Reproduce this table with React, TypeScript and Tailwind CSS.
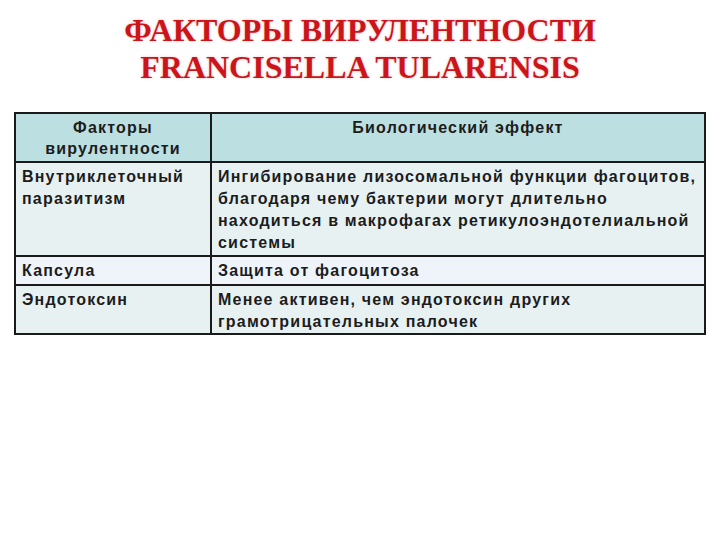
const ROWS = [
  {
    factor: ["Внутриклеточный", "паразитизм"],
    effect: [
      "Ингибирование лизосомальной функции фагоцитов,",
      "благодаря чему бактерии могут длительно",
      "находиться в макрофагах ретикулоэндотелиальной",
      "системы",
    ],
    height: "h-[94px]",
    bg: "bg-[#e7f1f2]",
  },
  {
    factor: ["Капсула"],
    effect: ["Защита от фагоцитоза"],
    height: "h-[29px]",
    bg: "bg-[#eef4fa]",
  },
  {
    factor: ["Эндотоксин"],
    effect: ["Менее активен, чем эндотоксин других", "грамотрицательных палочек"],
    height: "h-[48px]",
    bg: "bg-[#e7f1f2]",
  },
];

export default function App() {
  return (
    <div className="h-[540px] w-[720px] bg-white">
      <h1 className="pt-[12px] text-center font-['Liberation_Serif',serif] text-[32px] font-bold leading-[37px] text-[#cc151b] [text-shadow:0_0_3px_rgba(200,0,0,0.25)]">
        ФАКТОРЫ ВИРУЛЕНТНОСТИ
        <br />
        FRANCISELLA TULARENSIS
      </h1>

      <table className="ml-[14px] mt-[26px] w-[692px] border-collapse font-['Liberation_Sans',Arial,sans-serif] text-[16px] font-bold tracking-[1.2px] text-[#1c1c1c]">
        <thead>
          <tr className="h-[49px] bg-[#bcdfe2]">
            <th className="w-[196px] border-2 border-[#1a1a1a] px-[6px] pt-[3px] align-top font-bold leading-[21px]">
              Факторы
              <br />
              вирулентности
            </th>
            <th className="border-2 border-[#1a1a1a] px-[6px] pt-[3px] align-top font-bold leading-[21px]">
              Биологический эффект
            </th>
          </tr>
        </thead>
        <tbody>
          {ROWS.map((row) => (
            <tr key={row.factor[0]} className={`${row.height} ${row.bg}`}>
              <td className="border-2 border-[#1a1a1a] px-[6px] pt-[3px] align-top leading-[22px]">
                {row.factor.map((line) => (
                  <div key={line}>{line}</div>
                ))}
              </td>
              <td className="border-2 border-[#1a1a1a] px-[6px] pt-[3px] align-top leading-[22px]">
                {row.effect.map((line) => (
                  <div key={line} className="whitespace-nowrap">
                    {line}
                  </div>
                ))}
              </td>
            </tr>
          ))}
        </tbody>
      </table>
    </div>
  );
}
